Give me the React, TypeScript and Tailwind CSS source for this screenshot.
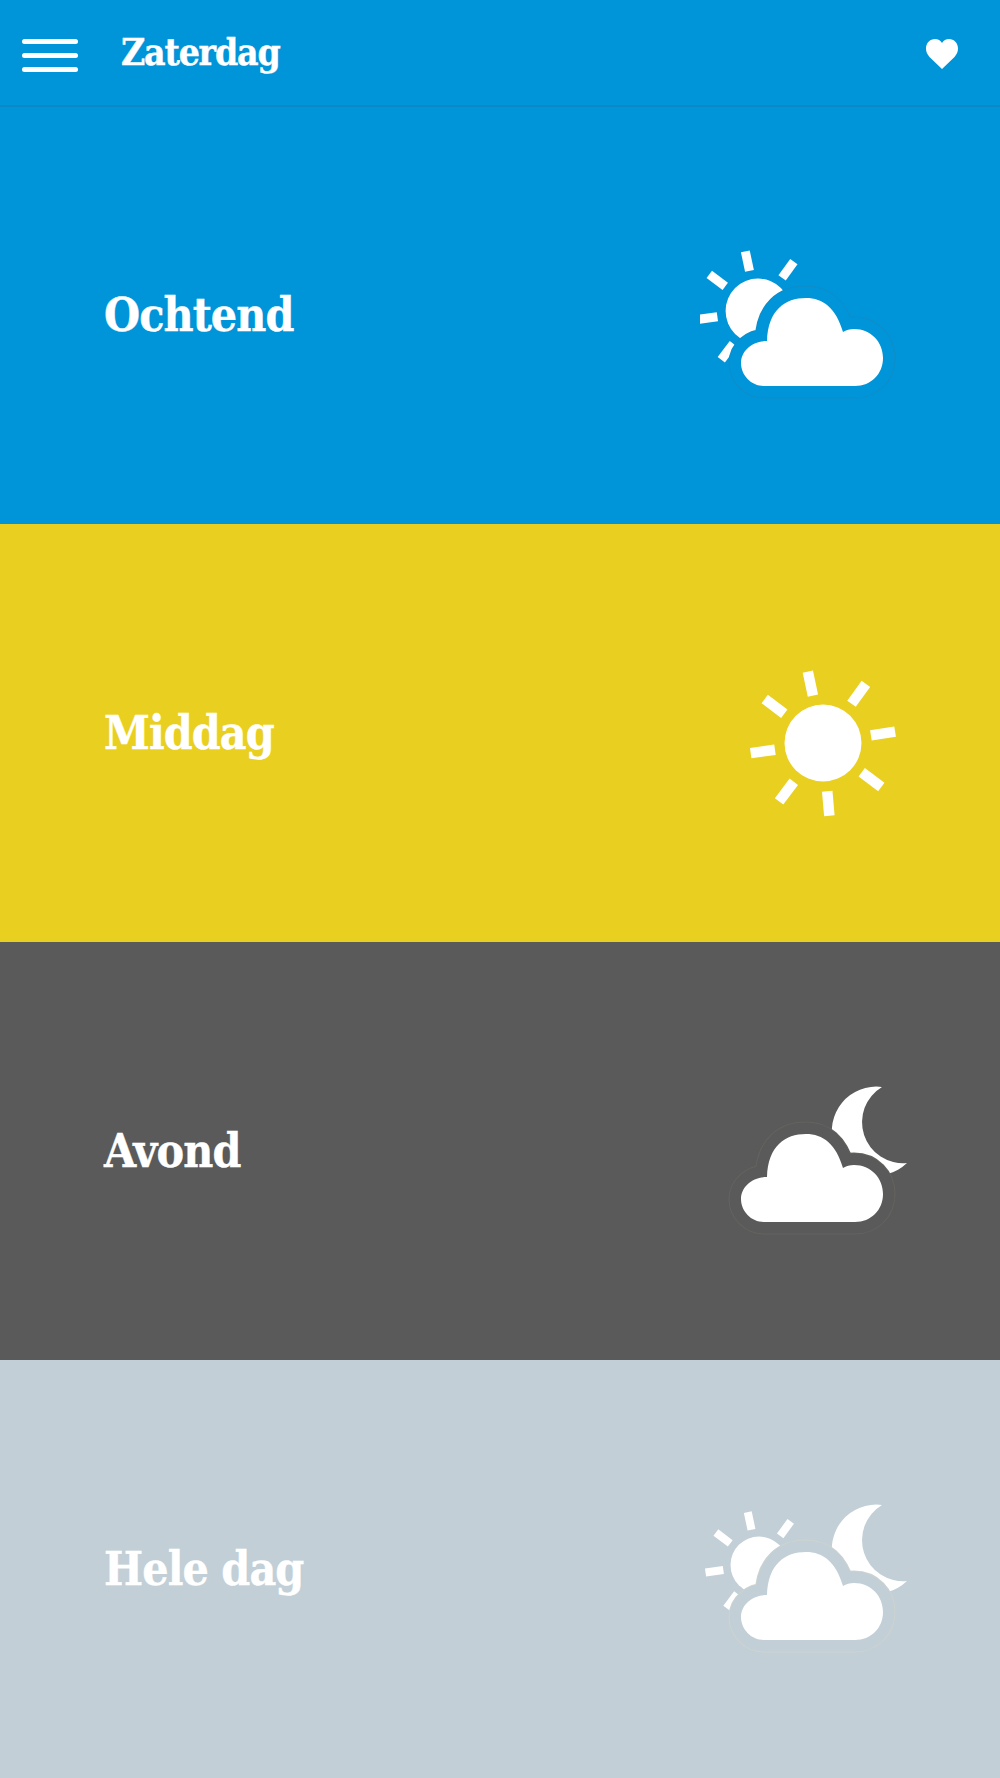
import React from "react";

const CLOUD =
  "M23 88 C10 88 0 77 0 65 C0 53 11 43 26 43 C27 12 44 0 65 0 C82 0 95 10 102 34 C105 32 109 31 113 31 C130 31 142 44 142 60 C142 76 130 88 114 88 Z";
const MOON = "M182 51 A44.4 44.4 0 1 0 207 127 A41 41 0 0 1 182 51 Z";
const ANGLES = [-12, 36, 81, 127, 175, 217, 262, 307];

function Sun({ cx, cy, r, inner, outer, w }: { cx: number; cy: number; r: number; inner: number; outer: number; w: number }) {
  return (
    <g fill="#ffffff">
      <circle cx={cx} cy={cy} r={r} />
      {ANGLES.map((a) => (
        <rect key={a} x={cx - w / 2} y={cy - outer} width={w} height={outer - inner} transform={`rotate(${a} ${cx} ${cy})`} />
      ))}
    </g>
  );
}

function Cloud({ bg, ring }: { bg: string; ring: string }) {
  return (
    <g transform="translate(41 98)" strokeLinejoin="round">
      <path d={CLOUD} fill={bg} stroke={ring} strokeWidth={25} />
      <path d={CLOUD} fill={bg} stroke={bg} strokeWidth={23} />
      <path d={CLOUD} fill="#ffffff" />
    </g>
  );
}

function Icon({ kind, bg, ring }: { kind: string; bg: string; ring: string }) {
  return (
    <svg width="230" height="230" viewBox="0 0 230 230" className="shrink-0">
      {kind === "morning" && <Sun cx={58} cy={111} r={32.4} inner={41} outer={61} w={9} />}
      {kind === "noon" && <Sun cx={123} cy={125} r={38.5} inner={48.5} outer={73} w={10.5} />}
      {kind === "all" && <Sun cx={59} cy={111} r={28.5} inner={36} outer={54} w={8} />}
      {(kind === "night" || kind === "all") && <path d={MOON} fill="#ffffff" />}
      {kind !== "noon" && <Cloud bg={bg} ring={ring} />}
    </svg>
  );
}

const rows = [
  { label: "Ochtend", kind: "morning", bg: "#0094d9", ring: "#0f8dc8", cls: "bg-[#0094d9]" },
  { label: "Middag", kind: "noon", bg: "#e9cf1f", ring: "#e9cf1f", cls: "bg-[#e9cf1f]" },
  { label: "Avond", kind: "night", bg: "#5a5a5a", ring: "#65635e", cls: "bg-[#5a5a5a]" },
  { label: "Hele dag", kind: "all", bg: "#c2cfd7", ring: "#cdd3cf", cls: "bg-[#c2cfd7]" },
];

export default function App() {
  return (
    <div className="w-[1000px] h-[1778px] flex flex-col overflow-hidden font-['DejaVu_Serif',serif] text-white">
      <header className="relative h-[106px] shrink-0 flex items-center bg-[#0094d9] border-b border-[#0b88c6] shadow-[0_1px_0_#0b88c6]">
        <div className="ml-[22px] w-[56px] flex flex-col gap-[9px] mt-[5px]">
          <span className="block h-[5px] rounded-full bg-white" />
          <span className="block h-[5px] rounded-full bg-white" />
          <span className="block h-[5px] rounded-full bg-white" />
        </div>
        <h1 className="ml-[43px] text-[37px] leading-none font-bold font-stretch-condensed tracking-[-1.2px] [-webkit-text-stroke:0.4px_white]">Zaterdag</h1>
        <svg className="ml-auto mr-[42px] mt-[3px]" width="32" height="30" viewBox="0 0 32 30">
          <path d="M16 30 L3.5 18 C1 15 0 12.5 0 9.5 C0 4 4 0 9 0 C12 0 14.5 1.5 16 4 C17.5 1.5 20 0 23 0 C28 0 32 4 32 9.5 C32 12.5 31 15 28.5 18 Z" fill="#ffffff" />
        </svg>
      </header>
      {rows.map((r) => (
        <section key={r.label} className={`h-[418px] shrink-0 flex items-center justify-between pl-[104px] pr-[70px] ${r.cls}`}>
          <h2 className="text-[46px] leading-none font-bold font-stretch-condensed tracking-[-0.9px] [-webkit-text-stroke:0.4px_white]">{r.label}</h2>
          <Icon kind={r.kind} bg={r.bg} ring={r.ring} />
        </section>
      ))}
    </div>
  );
}
